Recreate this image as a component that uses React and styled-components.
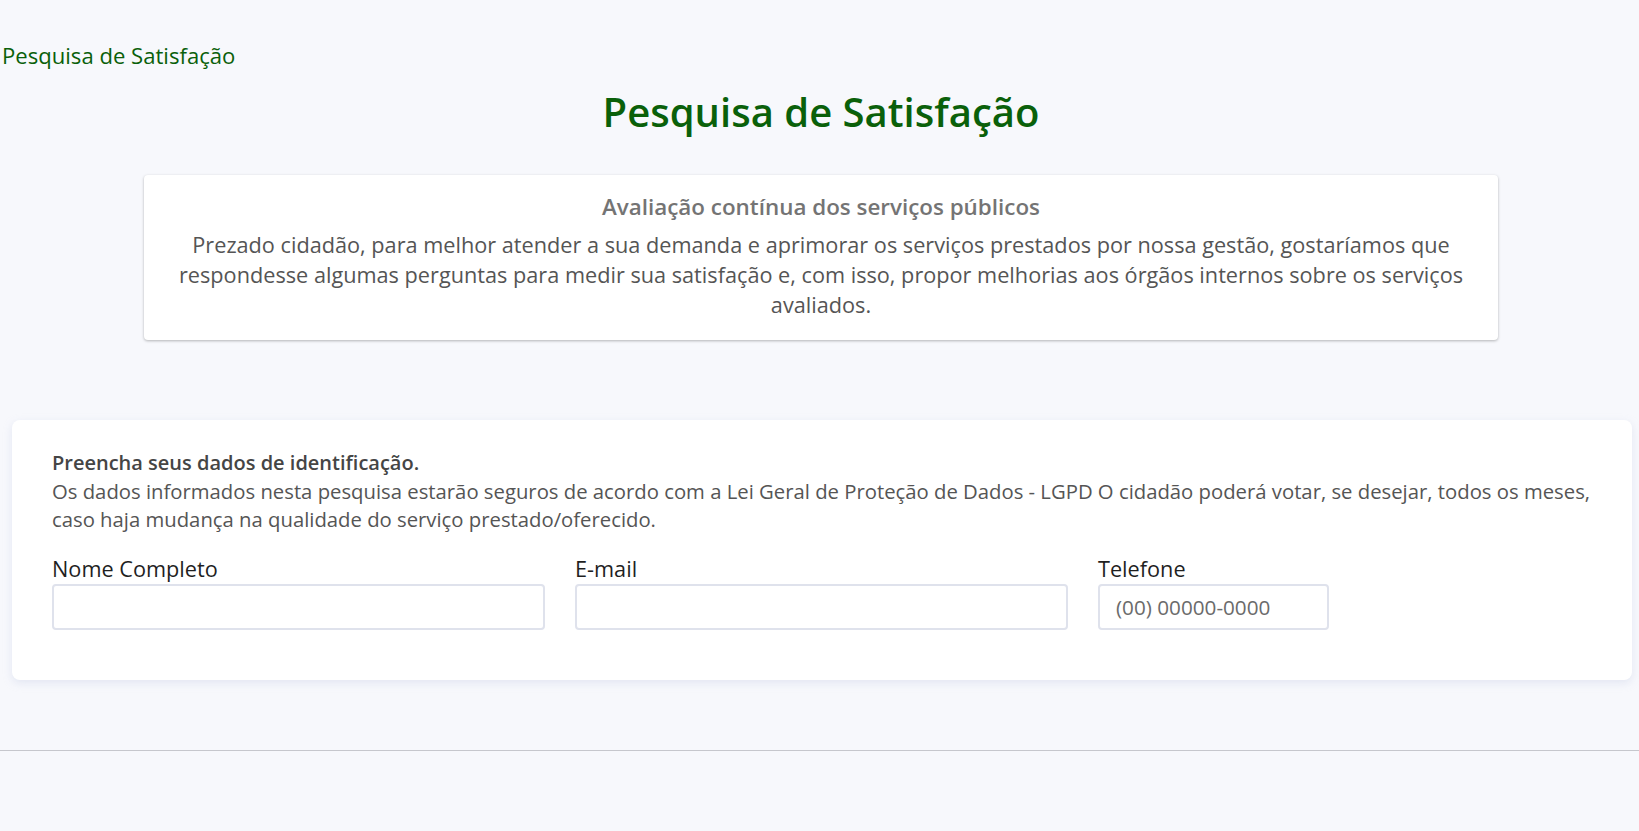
import React from 'react'
import styled, { createGlobalStyle } from 'styled-components'

const GlobalStyle = createGlobalStyle`
  * { box-sizing: border-box; }
  html, body {
    margin: 0;
    padding: 0;
  }
  body {
    background: #f7f8fc;
    font-family: 'Open Sans', 'Liberation Sans', sans-serif;
    color: #555;
  }
`

const Page = styled.div`
  min-height: 831px;
  display: flex;
  flex-direction: column;
`

const TopTitle = styled.div`
  padding: 40px 0 0 2px;
  font-size: 22.1px;
  line-height: 30px;
  color: #0a600a;
`

const Heading = styled.h1`
  margin: 18px 0 0 3px;
  text-align: center;
  font-size: 40px;
  line-height: 48px;
  font-weight: 600;
  color: #0a600a;
`

const IntroCard = styled.section`
  width: 1354px;
  margin: 39px 0 0 calc(50% - 675.5px);
  padding: 18px 16px 20px;
  background: #fff;
  border-radius: 4px;
  box-shadow: 0 1px 3px rgba(0, 0, 0, 0.28);
  text-align: center;
`

const IntroTitle = styled.h2`
  margin: 0 0 9px;
  font-size: 22.4px;
  line-height: 28px;
  font-weight: 600;
  color: #747474;
`

const IntroText = styled.p`
  margin: 0;
  font-size: 21.7px;
  line-height: 30px;
  color: #555;
`

const FormCard = styled.section`
  margin: 80px 7px 0 12px;
  padding: 29px 20px 50px 40px;
  background: #fff;
  border-radius: 8px;
  box-shadow: 0 3px 8px rgba(190, 198, 225, 0.35);
`

const FormTitle = styled.div`
  font-size: 20px;
  line-height: 28px;
  font-weight: 600;
  color: #454545;
`

const FormText = styled.p`
  margin: 0;
  font-size: 20.3px;
  line-height: 28px;
  color: #555;
`

const Fields = styled.div`
  display: grid;
  grid-template-columns: 493px 493px 231px;
  column-gap: 30px;
  margin-top: 21px;
`

const Field = styled.label`
  display: flex;
  flex-direction: column;
`

const LabelText = styled.span`
  font-size: 21.7px;
  line-height: 30px;
  color: #1f1f1f;
`

const Input = styled.input`
  height: 46px;
  padding: 0 16px;
  border: 2px solid #dfe2ec;
  border-radius: 4px;
  background: #fff;
  font-family: inherit;
  font-size: 20.7px;
  color: #333;
  outline: none;

  &::placeholder {
    color: #6b6b6b;
  }
`

const Divider = styled.hr`
  margin: 70px 0 0;
  border: 0;
  border-top: 1px solid #c6c7cd;
`

const fields = [
  { label: 'Nome Completo', type: 'text' },
  { label: 'E-mail', type: 'email' },
  { label: 'Telefone', type: 'tel', placeholder: '(00) 00000-0000' },
]

const App = () => {
  return (
    <Page>
      <GlobalStyle />
      <TopTitle>Pesquisa de Satisfação</TopTitle>
      <Heading>Pesquisa de Satisfação</Heading>

      <IntroCard>
        <IntroTitle>Avaliação contínua dos serviços públicos</IntroTitle>
        <IntroText>
          Prezado cidadão, para melhor atender a sua demanda e aprimorar os serviços prestados por
          nossa gestão, gostaríamos que respondesse algumas perguntas para medir sua satisfação e,
          com isso, propor melhorias aos órgãos internos sobre os serviços avaliados.
        </IntroText>
      </IntroCard>

      <FormCard>
        <FormTitle>Preencha seus dados de identificação.</FormTitle>
        <FormText>
          Os dados informados nesta pesquisa estarão seguros de acordo com a Lei Geral de Proteção
          de Dados - LGPD O cidadão poderá votar, se desejar, todos os meses, caso haja mudança na
          qualidade do serviço prestado/oferecido.
        </FormText>
        <Fields>
          {fields.map((f) => (
            <Field key={f.label}>
              <LabelText>{f.label}</LabelText>
              <Input type={f.type} placeholder={f.placeholder} />
            </Field>
          ))}
        </Fields>
      </FormCard>

      <Divider />
    </Page>
  )
}

export default App
